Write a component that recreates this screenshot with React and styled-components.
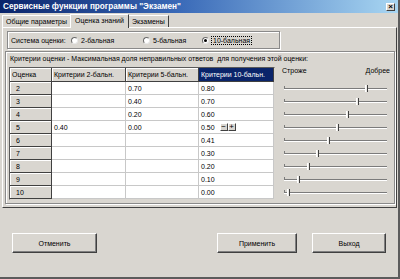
import styled, { createGlobalStyle } from "styled-components";

const GlobalStyle = createGlobalStyle`
  html, body {
    margin: 0;
    padding: 0;
    background: #d9d6d0;
  }
  body {
    font-family: "Liberation Sans", Arial, sans-serif;
    font-size: 7px;
    color: #000;
  }
`;

const rows = [
  { grade: 2, c2: "", c5: "0.70", c10: "0.80", v: 0.8 },
  { grade: 3, c2: "", c5: "0.40", c10: "0.70", v: 0.7 },
  { grade: 4, c2: "", c5: "0.20", c10: "0.60", v: 0.6 },
  { grade: 5, c2: "0.40", c5: "0.00", c10: "0.50", v: 0.5, spin: true },
  { grade: 6, c2: "", c5: "", c10: "0.41", v: 0.41 },
  { grade: 7, c2: "", c5: "", c10: "0.30", v: 0.3 },
  { grade: 8, c2: "", c5: "", c10: "0.20", v: 0.2 },
  { grade: 9, c2: "", c5: "", c10: "0.10", v: 0.1 },
  { grade: 10, c2: "", c5: "", c10: "0.00", v: 0 },
];

const App = () => {
  return (
    <>
      <GlobalStyle />
      <Window>
        <TitleBar>
          <Title>Сервисные функции программы "Экзамен"</Title>
          <CloseBtn>×</CloseBtn>
        </TitleBar>
        <Body>
          <Tabs>
            <Tab>Общие параметры</Tab>
            <Tab $active>Оценка знаний</Tab>
            <Tab>Экзамены</Tab>
          </Tabs>
          <Page>
            <ScaleBox>
              <ScaleLabel>Система оценки:</ScaleLabel>
              <RadioItem $w={72}>
                <Radio />
                <span>2-бальная</span>
              </RadioItem>
              <RadioItem $w={59}>
                <Radio />
                <span>5-бальная</span>
              </RadioItem>
              <RadioItem>
                <Radio $checked />
                <Focused>10-бальная</Focused>
              </RadioItem>
            </ScaleBox>
            <CriteriaBox>
              <Caption>
                Критерии оценки - Максимальная доля неправильных ответов&nbsp; для получения этой оценки:
              </Caption>
              <Content>
                <Grid>
                  <Cell $kind="head">Оценка</Cell>
                  <Cell $kind="head">Критерии 2-бальн.</Cell>
                  <Cell $kind="head">Критерии 5-бальн.</Cell>
                  <Cell $kind="sel">Критерии 10-бальн.</Cell>
                  {rows.map((r) => (
                    <Row key={r.grade} r={r} />
                  ))}
                </Grid>
                <Sliders>
                  <SliderHead>
                    <span>Строже</span>
                    <span>Добрее</span>
                  </SliderHead>
                  {rows.map((r) => (
                    <SliderRow key={r.grade}>
                      <Track>
                        <Thumb style={{ left: 3 + r.v * 98 }} />
                      </Track>
                    </SliderRow>
                  ))}
                </Sliders>
              </Content>
            </CriteriaBox>
          </Page>
          <Footer>
            <Button $w={85}>Отменить</Button>
            <RightButtons>
              <Button $w={80}>Применить</Button>
              <Button $w={74}>Выход</Button>
            </RightButtons>
          </Footer>
        </Body>
      </Window>
    </>
  );
};

const Row = ({ r }) => (
  <>
    <Cell $kind="fixed">{r.grade}</Cell>
    <Cell>{r.c2}</Cell>
    <Cell>{r.c5}</Cell>
    <Cell>
      {r.c10}
      {r.spin && (
        <Spin>
          <SpinBtn>−</SpinBtn>
          <SpinBtn>+</SpinBtn>
        </Spin>
      )}
    </Cell>
  </>
);

const Window = styled.div`
  width: 400px;
  height: 279px;
  box-sizing: border-box;
  display: flex;
  flex-direction: column;
  background: #d9d6d0;
  border-right: 2px solid #5c5c5c;
  border-bottom: 2px solid #5c5c5c;
  overflow: hidden;
`;

const TitleBar = styled.div`
  height: 13px;
  flex: none;
  display: flex;
  align-items: center;
  justify-content: space-between;
  padding: 0 3px 0 3px;
  background: linear-gradient(to right, #0a246a, #3a6ab8 45%, #a8d6f2);
`;

const Title = styled.span`
  color: #fff;
  font-weight: bold;
  font-size: 8.2px;
  white-space: nowrap;
`;

const CloseBtn = styled.div`
  width: 9px;
  height: 8px;
  box-sizing: border-box;
  background: #d9d6d0;
  border: 1px solid;
  border-color: #fff #404040 #404040 #fff;
  font-size: 8px;
  font-weight: bold;
  line-height: 6px;
  text-align: center;
`;

const Body = styled.div`
  flex: 1;
  display: flex;
  flex-direction: column;
  padding: 1px 1px 0 2px;
`;

const Tabs = styled.div`
  display: flex;
  align-items: flex-end;
  height: 13px;
`;

const Tab = styled.div`
  position: relative;
  height: ${(p) => (p.$active ? 14 : 12)}px;
  box-sizing: border-box;
  padding: 0 ${(p) => (p.$active ? 4 : 3)}px;
  margin: 0 ${(p) => (p.$active ? -1 : 0)}px ${(p) => (p.$active ? -1 : 0)}px;
  z-index: ${(p) => (p.$active ? 1 : 0)};
  background: #d9d6d0;
  border: 1px solid;
  border-color: #fff #404040 transparent #fff;
  border-bottom: none;
  line-height: ${(p) => (p.$active ? 12 : 11)}px;
  white-space: nowrap;
`;

const Page = styled.div`
  height: 181px;
  box-sizing: border-box;
  border: 1px solid;
  border-color: #fff #404040 #404040 #fff;
  padding: 3px 2px 0 1px;
  display: flex;
  flex-direction: column;
`;

const ScaleBox = styled.div`
  width: 273px;
  height: 18px;
  box-sizing: border-box;
  margin-left: 3px;
  display: flex;
  align-items: center;
  padding-left: 3px;
  border: 1px solid #8a8a8a;
  box-shadow: inset 1px 1px #fff, 1px 1px #fff;
`;

const ScaleLabel = styled.span`
  width: 60px;
`;

const RadioItem = styled.div`
  display: flex;
  align-items: center;
  gap: 3px;
  width: ${(p) => (p.$w ? `${p.$w}px` : "auto")};
`;

const Radio = styled.span`
  width: 7px;
  height: 7px;
  box-sizing: border-box;
  border-radius: 50%;
  background: #fff;
  border: 1px solid;
  border-color: #6a6a6a #e8e8e8 #e8e8e8 #6a6a6a;
  display: flex;
  align-items: center;
  justify-content: center;
  &::after {
    content: "";
    width: 3px;
    height: 3px;
    border-radius: 50%;
    background: ${(p) => (p.$checked ? "#000" : "transparent")};
  }
`;

const Focused = styled.span`
  outline: 1px dotted #000;
  padding: 0 1px;
`;

const CriteriaBox = styled.div`
  margin: 2px 0 0 1px;
  width: 390px;
  height: 153px;
  box-sizing: border-box;
  border: 1px solid #8a8a8a;
  box-shadow: inset 1px 1px #fff, 1px 1px #fff;
  padding: 2px 3px 0 3px;
  display: flex;
  flex-direction: column;
`;

const Caption = styled.div`
  height: 10px;
  line-height: 10px;
  margin: 0 0 3px 1px;
  white-space: nowrap;
`;

const Content = styled.div`
  display: flex;
  align-items: flex-start;
  gap: 5px;
`;

const Grid = styled.div`
  display: grid;
  grid-template-columns: 42px 74px 73px 75px;
  grid-template-rows: 14px repeat(9, 13px);
  background: #fff;
  border: 1px solid;
  border-color: #5a5a5a #d9d6d0 #d9d6d0 #5a5a5a;
  box-shadow: inset 1px 1px #404040;
`;

const Cell = styled.div`
  position: relative;
  box-sizing: border-box;
  display: flex;
  align-items: center;
  white-space: nowrap;
  overflow: hidden;
  padding-left: ${(p) => (p.$kind === "fixed" ? 6 : 2)}px;
  border-right: 1px solid ${(p) => (p.$kind ? "#404040" : "#c8c8c8")};
  border-bottom: 1px solid ${(p) => (p.$kind ? "#404040" : "#c8c8c8")};
  background: ${(p) =>
    p.$kind === "sel" ? "#0a246a" : p.$kind ? "#d9d6d0" : "#fff"};
  color: ${(p) => (p.$kind === "sel" ? "#fff" : "#000")};
  box-shadow: ${(p) =>
    p.$kind === "fixed" || p.$kind === "head" ? "inset 1px 1px #fff" : "none"};
`;

const Spin = styled.div`
  display: flex;
  margin-left: 5px;
`;

const SpinBtn = styled.div`
  width: 8px;
  height: 8px;
  box-sizing: border-box;
  background: #d9d6d0;
  border: 1px solid;
  border-color: #fff #404040 #404040 #fff;
  font-size: 8px;
  line-height: 6px;
  text-align: center;
`;

const Sliders = styled.div`
  width: 113px;
  display: flex;
  flex-direction: column;
`;

const SliderHead = styled.div`
  height: 15px;
  box-sizing: border-box;
  display: flex;
  align-items: flex-start;
  justify-content: space-between;
  padding: 0 1px 0 2px;
`;

const SliderRow = styled.div`
  height: 13px;
  display: flex;
  align-items: center;
  padding-left: 4px;
`;

const Track = styled.div`
  position: relative;
  width: 103px;
  height: 0;
  border-top: 1px solid #7b7b7b;
  border-bottom: 1px solid #fff;
  &::before {
    content: "";
    position: absolute;
    left: 0;
    top: -3px;
    width: 1px;
    height: 3px;
    background: #7b7b7b;
  }
`;

const Thumb = styled.div`
  position: absolute;
  top: -4px;
  width: 3px;
  height: 7px;
  box-sizing: border-box;
  background: #eeece8;
  border-left: 1px solid #fff;
  border-right: 1px solid #404040;
`;

const Footer = styled.div`
  display: flex;
  align-items: flex-start;
  padding: 25px 11px 0 10px;
`;

const RightButtons = styled.div`
  display: flex;
  gap: 15px;
  margin-left: auto;
`;

const Button = styled.div`
  width: ${(p) => p.$w}px;
  height: 20px;
  box-sizing: border-box;
  display: flex;
  align-items: center;
  justify-content: center;
  background: #d9d6d0;
  border: 1px solid;
  border-color: #fff #404040 #404040 #fff;
  box-shadow: inset -1px -1px #808080;
`;

export default App;
